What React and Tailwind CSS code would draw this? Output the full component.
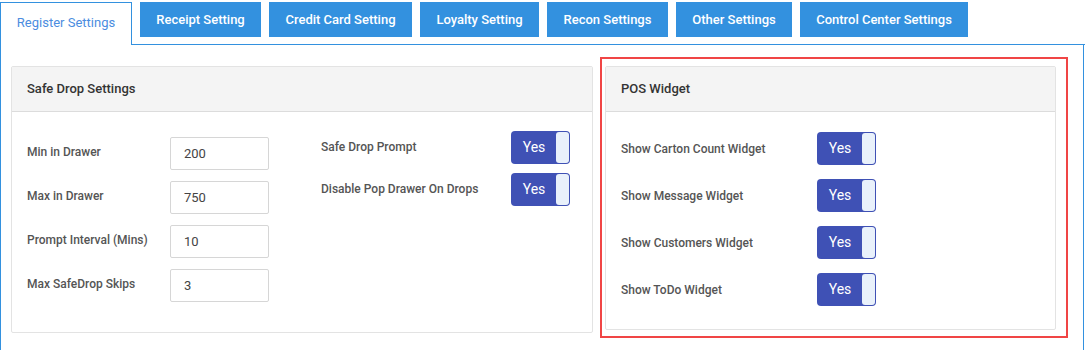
import React from 'react';

const tabs = [
  { label: 'Receipt Setting', w: 'w-[121px]' },
  { label: 'Credit Card Setting', w: 'w-[143px]' },
  { label: 'Loyalty Setting', w: 'w-[119px]' },
  { label: 'Recon Settings', w: 'w-[121px]' },
  { label: 'Other Settings', w: 'w-[116px]' },
  { label: 'Control Center Settings', w: 'w-[168px]' },
];

const drawerFields = [
  { label: 'Min in Drawer', value: '200' },
  { label: 'Max in Drawer', value: '750' },
  { label: 'Prompt Interval (Mins)', value: '10' },
  { label: 'Max SafeDrop Skips', value: '3' },
];

const widgets = ['Show Carton Count Widget', 'Show Message Widget', 'Show Customers Widget', 'Show ToDo Widget'];

function Toggle() {
  return (
    <div className="flex h-[33px] w-[59px] rounded-[4px] bg-[#3f51b5] p-px">
      <span className="flex flex-1 items-center justify-center pb-px text-[14px] text-white">Yes</span>
      <span className="w-[13px] rounded-[3px] bg-[#e9f1fb]" />
    </div>
  );
}

export default function App() {
  return (
    <div className="w-[1085px] h-[350px] overflow-hidden bg-white font-['Roboto',sans-serif]">
      {/* Tabs */}
      <div className="flex items-start gap-2 pt-[2px] border-b border-[#3391df]">
        <div className="-mb-px flex h-[43px] w-[132px] items-start justify-center border border-b-0 border-[#3391df] bg-white pt-[10px] text-[13px] text-[#4b8de0]">
          Register Settings
        </div>
        {tabs.map(t => (
          <div key={t.label} className={`flex h-[35px] ${t.w} items-center justify-center bg-[#3391df] text-[13px] font-medium text-white`}>
            {t.label}
          </div>
        ))}
      </div>

      {/* Content */}
      <div className="flex h-[310px] w-[1084px] items-start border-x border-[#3391df] pl-[10px] pt-[21px]">
        {/* Safe Drop Settings */}
        <div className="w-[582px] rounded-[2px] border border-[#e3e3e3]">
          <div className="flex h-[45px] items-center border-b border-[#dcdcdc] bg-[#f4f4f4] px-[15px] text-[13px] font-medium text-[#333]">
            Safe Drop Settings
          </div>
          <div className="flex px-[15px] pt-[25px] pb-[30px]">
            <div className="flex w-[294px] flex-col gap-[11px]">
              {drawerFields.map(f => (
                <div key={f.label} className="flex items-start">
                  <span className="w-[143px] pt-[6px] text-[12px] font-medium text-[#555]">{f.label}</span>
                  <div className="flex h-[33px] w-[99px] items-center rounded-[2px] border border-[#d6d6d6] px-[13px] text-[13px] text-[#444]">
                    {f.value}
                  </div>
                </div>
              ))}
            </div>
            <div className="-mt-[6px] flex flex-col gap-[9px]">
              {['Safe Drop Prompt', 'Disable Pop Drawer On Drops'].map(l => (
                <div key={l} className="flex items-start">
                  <span className="w-[190px] pt-[7px] text-[12px] font-medium text-[#555]">{l}</span>
                  <Toggle />
                </div>
              ))}
            </div>
          </div>
        </div>

        {/* POS Widget (highlighted) */}
        <div className="-mt-[9px] ml-[7px] border-2 border-[#f04545] pt-[7px] pl-[3px] pr-[10px] pb-[6px]">
          <div className="w-[451px] rounded-[2px] border border-[#e3e3e3]">
            <div className="flex h-[45px] items-center border-b border-[#dcdcdc] bg-[#f4f4f4] px-[15px] text-[13px] font-medium text-[#333]">
              POS Widget
            </div>
            <div className="flex flex-col gap-[14px] px-[15px] pt-[20px] pb-[23px]">
              {widgets.map(w => (
                <div key={w} className="flex items-center">
                  <span className="w-[196px] text-[12px] font-medium text-[#555]">{w}</span>
                  <Toggle />
                </div>
              ))}
            </div>
          </div>
        </div>
      </div>
    </div>
  );
}
